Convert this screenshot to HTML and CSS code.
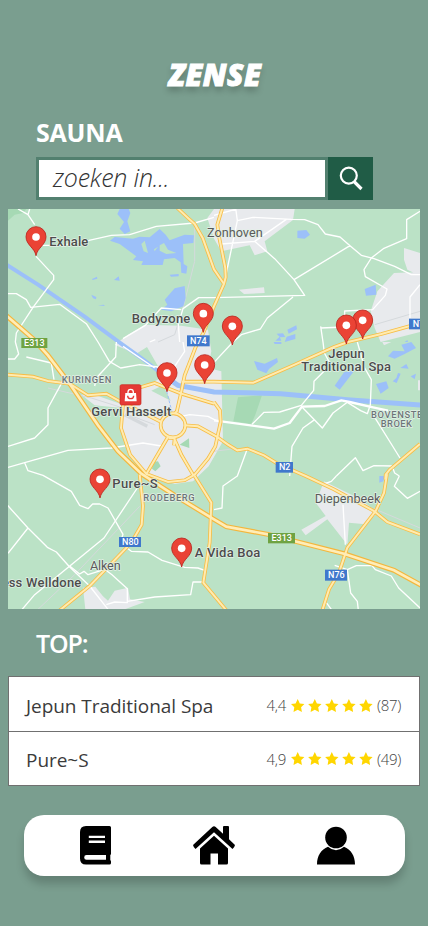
FILE: index.html
```html
<!DOCTYPE html>
<html lang="nl">
<head>
<meta charset="utf-8">
<meta name="viewport" content="width=device-width, initial-scale=1">
<title>Zense</title>
<link rel="stylesheet" href="styles.css">
</head>
<body>
<main class="app">
  <h1 class="brand">ZENSE</h1>
  <h2 class="heading sauna">SAUNA</h2>
  <form class="search">
    <div class="field">zoeken in...</div>
    <button class="search-btn" type="button" aria-label="Zoeken">
      <svg width="45" height="43" viewBox="0 0 45 43"><circle cx="20.8" cy="18.6" r="8" /><path d="M26 24.500L33.500 32" /></svg>
    </button>
  </form>

  <svg class="map" viewBox="0 3 1236 1200">
    <defs>
      <g id="pin">
        <path d="M0 0C-4-24-30-32-30-57A30 30 0 1 1 30-57C30-32 4-24 0 0Z" fill="#ea4335" stroke="#b9231c" stroke-width="2.5"/>
        <circle cy="-56" r="11.5" fill="#fff"/>
      </g>
      <g id="yellow-roads">
        <path d="M508 0L540 30 560 48 584 90 618 184 648 228"/>
        <path d="M643 0L628 50 634 90 652 180 653 208 648 228 618 295 586 375 563 417 530 502 518 560 506 612"/>
        <path d="M0 500L75 506 120 519 185 527 240 562 295 557 340 582 460 642"/>
        <path d="M390 540L440 525 520 557 618 587"/>
        <path d="M522 521L618 521 736 524 860 470 978 417 1020 402 1120 378 1236 346"/>
        <path d="M345 590L339 660 366 740 415 798 480 822 530 817 560 800 600 752 622 715 638 642 636 607 618 582"/>
        <path d="M480 687L415 798M482 690L498 690 520 740 557 803M500 690L498 712M506 612L500 615"/>
        <path d="M530 652L570 655 625 685 660 710 688 727 718 722 768 742 808 767 893 804 978 844 1098 909 1138 942 1236 979"/>
        <path d="M1137 798L1128 855 1103 909 1018 1019 993 1094 963 1144 943 1207M1132 815L1133 800 1145 785 1236 708"/>
        <path d="M395 800L405 894 401 950 370 1004 245 1134 155 1207"/>
        <path d="M560 804L610 884 605 1004 586 1124 655 1207"/>
        <ellipse cx="495" cy="652" rx="37" ry="36"/>
      </g>
      <path id="motorway" d="M-5 323L75 392 120 442 185 527 270 652 330 730 400 797 500 862 618 934 655 956 780 979 1008 1037 1158 1087 1240 1132"/>
    </defs>
    <rect y="3" width="1236" height="1200" fill="#bbe2c6"/>
    <g fill="#a6d9b4">
      <path d="M0 3H55L45 15 20 20 0 38ZM690 568L762 562 742 620 730 648 676 640Z"/>
    </g>
    <g fill="#e8eaed">
      <path d="M598 30L618 3H860L855 36 770 100 778 130 740 142 725 112 640 130 618 92Z"/>
      <path d="M320 410L360 380 410 350 520 353 600 365 610 430 600 480 640 490 645 700 602 775 555 820 500 828 415 798 362 730 338 660 342 600 260 592 220 560 260 560 345 590 400 536 440 520 478 500 390 440Z"/>
      <path d="M225 1139L262 1136 285 1165 300 1178 320 1148 360 1139 366 1174 410 1182 350 1204H232Z"/>
      <path d="M923 884L948 820 1058 874 1108 914 1073 949 1023 944 1018 1010 958 934 893 982 880 965 953 924Z"/>
      <path d="M1188 120L1236 135V203L1198 185 1188 155ZM1088 310L1108 250 1158 195 1236 192V372L1118 402 1100 360ZM693 245L768 238 770 255 708 258ZM1123 402H1150L1128 412ZM1230 517H1236V547H1230Z"/>
    </g>
    <g fill="#bbe2c6">
      <path d="M380 440L417 417 450 475 435 482ZM430 548L465 532 488 578Z"/>
    </g>
    <path d="M515 710L543 691 544 720ZM435 762L450 760 458 775 442 790 432 782Z" fill="#a6d9b4"/>
    <g fill="none" stroke="#d5d9dc" stroke-width="3">
      <path d="M560 45L560 160 540 240 525 300 500 380 450 402M395 895L200 1100 90 1204M345 600L250 570 120 540M1100 350L1236 310M1098 902L1236 960M360 620L440 650M618 730L680 722"/>
      <path d="M350 620L418 655" stroke-width="10"/>
    </g>
    <g fill="#9cc0f9">
      <path d="M335 3H362L367 15 358 40 367 70 350 78 335 62 348 42 328 18Z"/>
      <path fill-rule="evenodd" d="M306 98L320 87 375 92 395 86 425 88 455 63 473 80 485 97 530 80 558 82 556 105 525 108 527 168 538 175 535 197 520 194 518 163 500 150 468 154 464 171 400 171 405 160 375 156 385 145 335 108ZM400 108L410 98 420 135 407 130ZM438 124L450 116 440 130ZM455 112L468 105 480 125 505 135 475 138 455 128Z"/>
      <path d="M252 213L267 206 268 212 254 216ZM318 216L332 205 335 218ZM250 260L265 267 264 274 255 271ZM270 292L288 290 290 294ZM485 200L512 198 512 205 489 206ZM460 305L478 290 470 275 500 241 530 234 533 270 526 295 490 310Z"/>
      <path d="M868 68L895 66 906 80 890 92 868 90ZM1070 243L1103 230 1105 260 1074 263ZM838 365L865 352 867 364 842 377ZM806 377L825 376 832 387 816 388ZM802 398L815 386 820 398ZM836 386L862 378 862 393 830 402ZM1190 402L1198 396 1200 402Z"/>
      <path d="M738 459L770 467 807 450 810 462 783 483 775 496 748 485ZM797 402H820V408H800ZM980 533L1008 493 1040 487 1020 513 995 545ZM1140 445L1155 428 1190 430 1180 410 1210 402 1224 420 1190 438 1160 452ZM1177 480L1195 468 1202 482ZM1170 495L1178 497 1166 525 1154 520 1165 510ZM1208 505L1224 497 1220 514ZM1104 528L1135 520 1142 540 1118 557ZM1114 804H1130L1126 820 1114 824Z"/>
    </g>
    <path d="M-5 170L90 230 230 326 330 400 400 450 465 500" fill="none" stroke="#9cc0f9" stroke-width="12"/>
    <path d="M460 497L510 532 618 552 818 557 1018 575 1240 591" fill="none" stroke="#9cc0f9" stroke-width="15"/>
    <path d="M476 550L492 612" fill="none" stroke="#9cc0f9" stroke-width="3" stroke-dasharray="9 5"/>
    <g class="local-roads">
      <path d="M30 3L60 20 80 50M60 20L65 3M84 112H160L243 97 310 82 365 80 445 55 560 45 618 28M84 145L137 202V215L75 298 25 375 22 402"/>
      <path d="M0 257H25L55 275 68 298 155 289 235 347 270 402 304 460 338 480 395 470 450 477M345 392L412 352 460 300 520 305M618 269H572L525 302 511 350 515 402M0 453H20L32 438 22 402"/>
      <path d="M618 22L685 3M683 0L688 38 673 110 655 195M688 38L735 28 850 34 890 35 930 50 952 78 996 87 1026 113 1060 142 1098 152 1160 175 1210 200H1236M640 108L740 100 835 34M740 100L800 152 858 215 890 262 618 269M858 215L1026 113M855 267L778 330 757 363 700 380 675 402 618 463"/>
      <path d="M1236 10L1196 35 1196 92 1126 122 1090 150 1068 185 1072 206 1137 243 1132 262 1094 305 1010 309V340M938 355L945 402 949 435 965 464M938 360L1010 357M1236 230L1206 267V330"/>
      <path d="M55 447L130 465 138 515M160 527L120 600V650L80 690 0 715M0 778L50 764 180 727 310 720 405 705 460 714M50 764L60 788 105 802 190 850 215 892 240 902 254 888 275 888 300 900 345 979 338 1000M260 534L265 510 323 447 325 402M345 415L440 480M425 402L442 395M525 402L530 430 500 475"/>
      <path d="M-5 888L60 960 118 1018 145 1032 185 1077 245 1134 300 1204M60 960L0 1036M388 840L288 990 80 1160 40 1207"/>
      <path d="M185 1074L215 1098 228 1090 240 1100 290 1084 312 1100 358 1142V1184L320 1182 295 1190M358 1180L440 1167 548 1160 555 1122H586M350 1015L370 1030 420 1032 462 1057 530 1078 570 1080 592 1088M520 625L545 620 600 625 625 638"/>
      <path d="M732 649L768 613 815 612 880 592 917 547 918 520 958 480M882 597L943 660 975 615 1018 583 1058 608 1078 617 1087 590 1090 515 1070 480 1048 402M920 635L885 660 852 715 845 804M718 722L688 804 645 834 642 900 618 905M1095 620L1176 750M985 804L1042 749 1065 788 1098 773 1152 774 1160 795 1174 804"/>
      <path d="M948 828L970 820 985 804M1174 804L1159 835 1198 871 1236 850M1005 890L1012 1010M980 1072L1018 1085 1045 1073 1092 1073 1102 1085 1150 1104 1172 1140 1236 1200M1018 1085L1028 1155 1048 1180 1051 1207M955 1184L970 1204"/>
    </g>
    <path class="local-roads main" d="M618 637L798 662 845 645 882 596 950 594 1000 577 1025 582 1095 598 1140 608"/>
    <use href="#yellow-roads" fill="none" stroke="#f7bd45" stroke-width="11"/>
    <use href="#motorway" fill="none" stroke="#f4b63c" stroke-width="15"/>
    <use href="#yellow-roads" fill="none" stroke="#ffebb0" stroke-width="6"/>
    <use href="#motorway" fill="none" stroke="#ffedb7" stroke-width="8"/>
    <g class="shields">
      <g fill="#6fa342"><rect x="40" y="390" width="78" height="30"/><rect x="780" y="975" width="81" height="31"/></g>
      <g fill="#3f78cc"><rect x="537" y="382" width="68" height="33"/><rect x="1203" y="332" width="40" height="32"/><rect x="803" y="762" width="52" height="32"/><rect x="333" y="987" width="66" height="30"/><rect x="951" y="1085" width="66" height="33"/></g>
      <text x="79" y="415">E313</text><text x="821" y="999">E313</text>
      <text x="571" y="408">N74</text><text x="1239" y="357">N74</text><text x="830" y="787">N2</text><text x="367" y="1011">N80</text><text x="985" y="1110">N76</text>
    </g>
    <g class="labels">
      <text class="town" x="597" y="87" textLength="167">Zonhoven</text>
      <text class="town" x="246" y="1085" textLength="92">Alken</text>
      <text class="town" x="920" y="884" textLength="197">Diepenbeek</text>
      <text class="district" x="161" y="525" textLength="151">KURINGEN</text>
      <text class="district" x="406" y="879" textLength="156">RODEBERG</text>
      <text class="district" x="1089" y="630">BOVENSTE</text>
      <text class="district" x="1118" y="657" textLength="96">BROEK</text>
      <text x="124" y="114" textLength="117">Exhale</text>
      <text x="371" y="345" textLength="176">Bodyzone</text>
      <text x="961" y="449" textLength="109">Jepun</text>
      <text x="880" y="489" textLength="269">Traditional Spa</text>
      <text x="250" y="625" textLength="240">Gervi Hasselt</text>
      <text x="313" y="840" textLength="136">Pure~S</text>
      <text x="560" y="1046" textLength="197">A Vida Boa</text>
      <text x="2" y="1138" textLength="218">ss Welldone</text>
      <text x="-18" y="1138">e</text>
    </g>
    <g transform="translate(336 530)">
      <rect width="63" height="61" rx="5" fill="#e53a35" stroke="#c62820" stroke-width="2"/>
      <path d="M16 25H48L50 50H14Z" fill="#fff"/><path d="M24 27V22A8 8 0 0 1 40 22V27" fill="none" stroke="#fff" stroke-width="4"/><path d="M23 33A9 9 0 0 0 41 33" fill="none" stroke="#e53a35" stroke-width="4"/>
    </g>
    <use href="#pin" x="84" y="143"/><use href="#pin" x="586" y="373"/><use href="#pin" x="673" y="411"/>
    <use href="#pin" x="1064" y="393"/><use href="#pin" x="1015" y="408"/><use href="#pin" x="477" y="551"/>
    <use href="#pin" x="590" y="527"/><use href="#pin" x="276" y="870"/><use href="#pin" x="521" y="1077"/>
  </svg>

  <h2 class="heading top">TOP:</h2>
  <svg class="defs" width="0" height="0"><defs>
    <g id="stars"><path id="star" d="M6.700 0L8.800 4.400 13.400 5 10.100 8.300 10.900 13 6.700 10.800 2.500 13 3.300 8.300 0 5 4.600 4.400Z"/><use href="#star" x="17.1"/><use href="#star" x="34.1"/><use href="#star" x="51.2"/><use href="#star" x="68.2"/></g>
  </defs></svg>
  <ul class="results">
    <li><span class="name">Jepun Traditional Spa</span><span class="score">4,4</span><svg class="stars" viewBox="0 0 82 13"><use href="#stars"/></svg><span class="count">(87)</span></li>
    <li><span class="name pure">Pure~S</span><span class="score">4,9</span><svg class="stars" viewBox="0 0 82 13"><use href="#stars"/></svg><span class="count">(49)</span></li>
  </ul>

  <nav class="nav">
    <svg width="31" height="39" viewBox="0 0 31 39"><path fill-rule="evenodd" d="M6 0H29.500Q31 0 31 1.500V27.500Q31 28.500 30.300 29V34Q31 34.500 31 35.500V37Q31 38.500 29.500 38.500H6Q0 38.500 0 32.500V6Q0 0 6 0ZM8.800 9.700V12H25V9.700ZM8.800 14.500V17H25V14.500ZM6.500 29Q4.200 29 4.200 31.400T6.500 33.800H26V29Z"/></svg>
    <svg width="42" height="39" viewBox="0 0 42 39"><path d="M21 9.700L35 22.500V37Q35 38.500 33.500 38.500H25V27.500H17.500V38.500H8.500Q7 38.500 7 37V22.500Z"/><path d="M19.300 1Q21 -.5 22.700 1L30 7.700V1Q30 0 31 0H35Q36 0 36 1V13.200L42 19Q41.500 21.500 39.500 23L21 6.200 2.500 23Q.5 21.500 0 19Z"/></svg>
    <svg width="38" height="39" viewBox="0 0 38 39"><circle cx="19" cy="11.500" r="10.800"/><path d="M11 20.800Q19 27.800 27 20.800C34 23.500 38 30 38 38.500H0C0 30 4 23.500 11 20.800Z"/></svg>
  </nav>
</main>
</body>
</html>
```
FILE: styles.css
```css
* { box-sizing: border-box; }
body { margin: 0; background: #7a9e8f; font-family: "Open Sans", "Noto Sans", sans-serif; }
.app { display: flex; flex-direction: column; width: 428px; height: 926px; padding: 54px 8px 0; overflow: hidden; }
h1, h2, ul { margin: 0; padding: 0; font-weight: normal; }
.brand { height: 40px; line-height: 41px; padding-left: 2px; text-align: center; color: #fff; font-size: 30px; font-weight: 800; font-style: italic; letter-spacing: .5px; -webkit-text-stroke: 1px #fff; text-shadow: 0 5px 6px rgba(0,0,0,.22); white-space: nowrap; }
.heading { height: 36px; line-height: 36px; padding-left: 28px; color: #fff; font-size: 25px; font-weight: 700; letter-spacing: -.2px; }
.sauna { margin-top: 20px; }
.search { display: flex; width: 337px; height: 43px; margin: 7px 0 9px 28px; }
.field { flex: 1; border: 3px solid #52806f; background: #fff; padding-left: 14px; line-height: 35px; color: #333; font-size: 25px; font-style: italic; font-weight: 300; letter-spacing: -.2px; }
.search-btn { width: 45px; padding: 0; border: 0; background: #205c46; }
.search-btn svg { display: block; fill: none; stroke: #fff; stroke-width: 2.2; }
.search-btn path { stroke-width: 3.2; }
.map { display: block; width: 412px; height: 400px; flex: none; overflow: hidden; }
.local-roads { fill: none; stroke: #fff; stroke-width: 4; stroke-linejoin: round; }
.local-roads.main { stroke-width: 7; }
.labels, .shields { font-family: Roboto, sans-serif; }
.labels text { font-size: 39px; font-weight: 500; fill: #4c4c4c; stroke: #e4f1e8; stroke-width: 4; paint-order: stroke; stroke-linejoin: round; }
.labels .town { font-size: 38px; font-weight: 400; fill: #5a5a5a; }
.labels .district { font-size: 28px; font-weight: 500; fill: #6d7578; letter-spacing: 2px; }
.shields text { font-size: 27px; font-weight: 500; fill: #fff; text-anchor: middle; }
.top { margin-top: 16px; font-weight: 600; letter-spacing: -1.1px; }
.defs { display: block; flex: none; }
.results { margin-top: 15px; height: 110px; border: 1px solid #707070; background: #fff; list-style: none; }
.results li { display: flex; align-items: center; height: 54px; padding: 4px 18px 0 17px; color: #3b3b3b; }
.results li + li { height: 55px; border-top: 1px solid #707070; padding-top: 1px; }
.name { flex: 1; font-size: 19px; letter-spacing: -.05px; white-space: nowrap; }
.score, .count { position: relative; top: -1px; font-size: 15px; font-weight: 350; color: #444; letter-spacing: -.3px; white-space: nowrap; }
.stars { position: relative; top: -1px; width: 82px; height: 13px; margin: 0 4px 0 5px; fill: #ffd600; }
.nav { display: flex; flex: none; justify-content: space-between; width: 381px; height: 61px; margin: 29px 0 0 16px; padding: 11px 50px 0 56px; border-radius: 20px; background: #fff; box-shadow: 0 8px 8px rgba(0,0,0,.18); }
```
